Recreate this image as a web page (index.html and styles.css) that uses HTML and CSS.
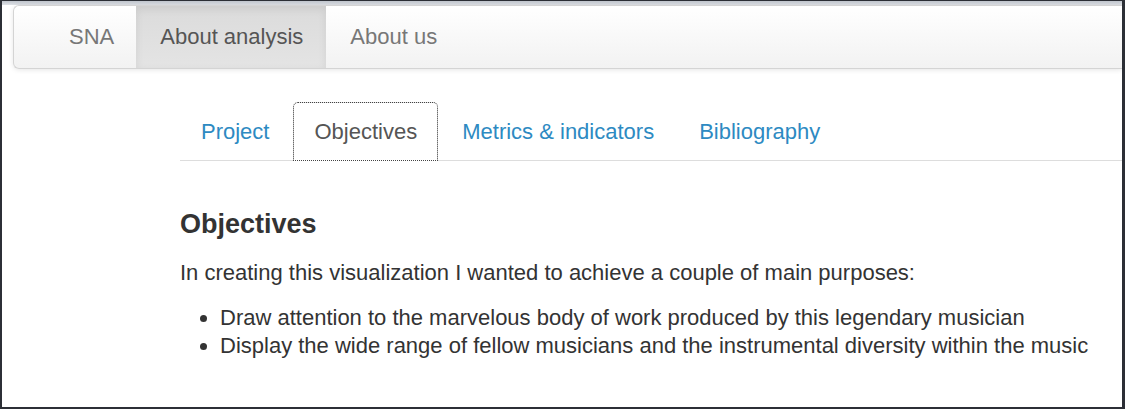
FILE: index.html
```html
<!DOCTYPE html>
<html lang="en">
<head>
<meta charset="utf-8">
<title>About analysis</title>
<link rel="stylesheet" href="styles.css">
</head>
<body>
<div class="frame">
  <div class="topband"></div>
  <nav class="navbar">
    <a class="brand" href="#">SNA</a>
    <ul class="navlinks">
      <li><a class="navlink active" href="#">About analysis</a></li>
      <li><a class="navlink" href="#">About us</a></li>
    </ul>
  </nav>
  <main class="main">
    <ul class="tabs">
      <li><a class="tab" href="#">Project</a></li>
      <li><a class="tab current" href="#">Objectives</a></li>
      <li><a class="tab" href="#">Metrics &amp; indicators</a></li>
      <li><a class="tab" href="#">Bibliography</a></li>
    </ul>
    <section class="pane">
      <h3 class="title">Objectives</h3>
      <p class="lead">In creating this visualization I wanted to achieve a couple of main purposes:</p>
      <ul class="points">
        <li>Draw attention to the marvelous body of work produced by this legendary musician</li>
        <li>Display the wide range of fellow musicians and the instrumental diversity within the music</li>
      </ul>
    </section>
  </main>
</div>
</body>
</html>
```
FILE: styles.css
```css
html, body {
  margin: 0;
  padding: 0;
  background: #fff;
}
body {
  font-family: "Liberation Sans", Arial, sans-serif;
  color: #333;
}
.frame {
  box-sizing: border-box;
  width: 1125px;
  height: 409px;
  border-style: solid;
  border-color: #2c2f36;
  border-width: 1px 3px 2px 2px;
  overflow: hidden;
  background: #fff;
}
.topband {
  height: 4px;
  background: linear-gradient(to bottom, #bfc4cc, #dfe2e7);
}
.navbar {
  display: flex;
  align-items: stretch;
  height: 64px;
  box-sizing: border-box;
  margin-left: 11px;
  border: 1px solid #d4d4d4;
  border-right: 0;
  border-radius: 6px 0 0 6px;
  background: linear-gradient(to bottom, #ffffff 0%, #f2f2f2 100%);
  box-shadow: 0 1px 5px rgba(0, 0, 0, 0.1);
  overflow: hidden;
}
.brand {
  display: block;
  padding: 0 22px 0 55px;
  line-height: 62px;
  font-size: 22px;
  color: #777;
  text-decoration: none;
}
.navlinks {
  display: flex;
  list-style: none;
  margin: 0;
  padding: 0;
}
.navlink {
  display: block;
  padding: 0 23px 0 24px;
  line-height: 62px;
  font-size: 22px;
  color: #777;
  text-decoration: none;
}
.navlink.active {
  color: #555;
  background: linear-gradient(to bottom, #dbdbdb 0%, #e4e4e4 100%);
  box-shadow: inset 0 3px 9px rgba(0, 0, 0, 0.08);
}
.main {
  padding: 33px 0 0 178px;
}
.tabs {
  display: flex;
  list-style: none;
  margin: 0;
  padding: 0;
  border-bottom: 1px solid #dddddd;
}
.tabs li {
  margin-right: 3px;
  margin-bottom: -1px;
}
.tab {
  display: block;
  padding: 0 20px;
  line-height: 57px;
  font-size: 22px;
  color: #2d8ac2;
  text-decoration: none;
  border: 1px solid transparent;
  border-radius: 5px 5px 0 0;
}
.tab.current {
  color: #555;
  background: #fff;
  border-color: #e2e2e2 #e2e2e2 transparent;
  outline: 1px dotted #444;
  outline-offset: -1px;
}
.pane {
  padding-top: 48px;
}
.title {
  margin: 0;
  font-size: 27px;
  font-weight: bold;
  line-height: 30px;
  color: #333;
}
.lead {
  margin: 20px 0 0;
  font-size: 22px;
  line-height: 28px;
  color: #333;
}
.points {
  margin: 17px 0 0;
  padding-left: 40px;
  font-size: 22px;
  line-height: 28px;
  color: #333;
}
```
